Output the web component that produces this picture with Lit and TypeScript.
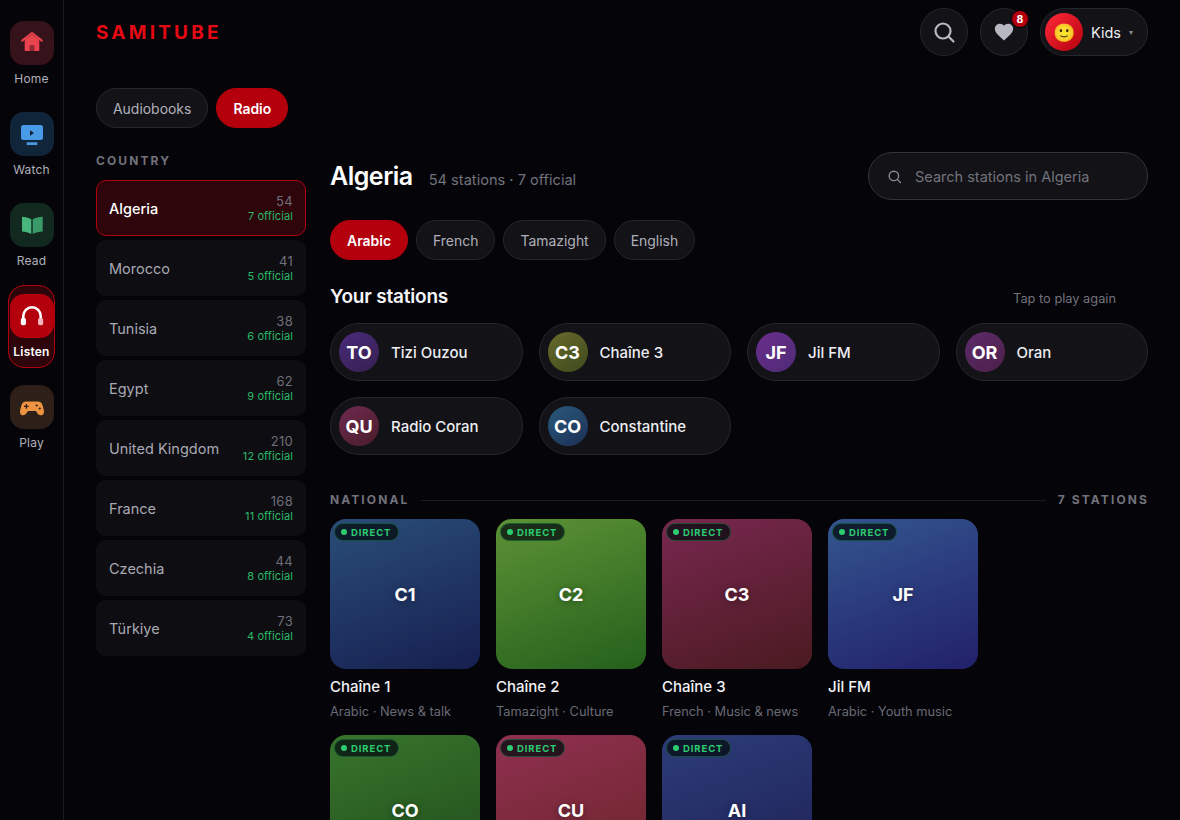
import { LitElement, html, css, svg } from "lit";
import { customElement } from "lit/decorators.js";

const nav = [
  { label: "Home", cls: "home", icon: svg`<path d="M3.200 10.600 13 3l9.800 7.600" fill="none" stroke="#e8434f" stroke-width="2" stroke-linecap="round" stroke-linejoin="round"/><path d="M5.700 9.800 13 4.500l7.300 5.300V21H5.700z" fill="#e8434f"/><rect x="10.700" y="15" width="4.600" height="6" fill="#8f2a33"/>` },
  { label: "Watch", cls: "watch", icon: svg`<rect x="2" y="4" width="22" height="15" rx="2.500" fill="#4a9be6"/><path d="M11 9.300v5.400l4-2.700z" fill="#10202f"/><rect x="7.700" y="21.300" width="10.600" height="2.700" rx=".5" fill="#4a9be6"/>` },
  { label: "Read", cls: "read", icon: svg`<path d="M3 4.800c3.400.2 6.500 1 9.300 2.400V22c-2.800-1.400-5.900-2.300-9.300-2.500z" fill="#48b67c"/><path d="M13.700 7.200c2.800-1.400 6.600-2.200 10-2.400v14.700c-3.400.2-7.200 1.100-10 2.500z" fill="#3a9a68"/>` },
  { label: "Listen", cls: "listen", icon: svg`<path d="M4.300 16v-3a8.700 8.700 0 0 1 17.400 0v3" fill="none" stroke="#fff" stroke-width="2.600"/><rect x="1.800" y="15" width="5.200" height="7.300" rx="2" fill="#fff"/><rect x="19" y="15" width="5.200" height="7.300" rx="2" fill="#f4b6bc"/>` },
  { label: "Play", cls: "play", icon: svg`<path d="M7.500 7.500h11c3 0 4.500 1.500 5.200 4.200l1.200 4.800c.5 2.500-.7 4.800-2.900 4.800-1.700 0-2.800-1-3.800-2.300L17 17H9l-1.200 1.800C6.800 20 5.700 21.300 4 21.300c-2.200 0-3.400-2.300-2.900-4.800l1.200-4.800C3 9 4.500 7.500 7.500 7.500z" fill="#ee9340"/><path d="M6.700 10h1.300v1.700h1.700V13H8v1.700H6.700V13H5v-1.300h1.700z" fill="#2e2018"/><circle cx="17.700" cy="11.500" r="1.100" fill="#2e2018"/><circle cx="20.700" cy="14.500" r="1.100" fill="#2e2018"/>` },
];
const countries = [
  ["Algeria", 54, 7], ["Morocco", 41, 5], ["Tunisia", 38, 6], ["Egypt", 62, 9],
  ["United Kingdom", 210, 12], ["France", 168, 11], ["Czechia", 44, 8], ["Türkiye", 73, 4],
];
const mine = [
  ["TO", "Tizi Ouzou", "#4a2a7c", "#35204f"], ["C3", "Chaîne 3", "#6b6a2a", "#3c4a1e"],
  ["JF", "Jil FM", "#6a2f8a", "#4f2a78"], ["OR", "Oran", "#5f2a6a", "#4a2048"],
  ["QU", "Radio Coran", "#6e2a50", "#4a1c2a"], ["CO", "Constantine", "#2a5a7c", "#1c2f55"],
];
const cards = [
  ["C1", "Chaîne 1", "Arabic · News & talk", "#2a4d78", "#161f50"],
  ["C2", "Chaîne 2", "Tamazight · Culture", "#5c9235", "#25601c"],
  ["C3", "Chaîne 3", "French · Music & news", "#78284f", "#4a1a20"],
  ["JF", "Jil FM", "Arabic · Youth music", "#33558f", "#22206a"],
  ["CO", "Constantine", "Arabic · Regional", "#38752c", "#1e4a1a"],
  ["CU", "Culture", "French · Culture", "#8f3050", "#6a2428"],
  ["AI", "Algérie Int.", "Arabic · World", "#2c3c78", "#1e2055"],
];

@customElement("app-root")
export class AppRoot extends LitElement {
  static styles = css`
    :host { display: flex; width: 1180px; height: 820px; overflow: hidden; background: #040409; color: #f2f2f5; font-family: Inter, "Noto Sans", sans-serif; }
    * { box-sizing: border-box; }
    .rail { width: 64px; flex: none; border-right: 1px solid #1a1a21; background: #050509; display: flex; flex-direction: column; align-items: flex-start; padding: 12px 0 0 8px; gap: 8px; }
    .nav { width: 47px; height: 83px; padding-top: 8px; border: 1px solid transparent; border-radius: 16px; display: flex; flex-direction: column; align-items: center; gap: 6px; font-size: 12px; line-height: 16px; color: #b0b0ba; letter-spacing: .2px; }
    .nav.listen { border-color: #b0000e; background: #2e050b; color: #fff; font-weight: 600; }
    .ic { width: 44px; height: 44px; flex: none; border-radius: 14px; display: flex; align-items: center; justify-content: center; margin-right: -1px; }
    .ic svg { width: 26px; height: 26px; }
    .home .ic { background: #36121a; } .watch .ic { background: #10243a; } .read .ic { background: #12291f; } .listen .ic { background: #b4000d; } .play .ic { background: #2e2018; }
    .main { flex: 1; min-width: 0; padding: 8px 32px 0; display: flex; flex-direction: column; }
    .top { height: 48px; display: flex; align-items: center; justify-content: space-between; flex: none; }
    .logo { color: #e50914; font-size: 19px; font-weight: 700; letter-spacing: 3.200px; }
    .actions { display: flex; gap: 12px; align-items: center; }
    .rb { width: 48px; height: 48px; border-radius: 50%; background: #121217; border: 1px solid #26262d; display: flex; align-items: center; justify-content: center; position: relative; }
    .badge { position: absolute; top: 1px; right: -2px; width: 18px; height: 18px; border-radius: 50%; background: #b4000d; border: 1px solid #040409; color: #fff; font-size: 10.500px; font-weight: 700; display: flex; align-items: center; justify-content: center; }
    .kids { height: 48px; width: 108px; border-radius: 24px; background: #121217; border: 1px solid #26262d; display: flex; align-items: center; padding-left: 4px; font-size: 14.500px; color: #ededf2; }
    .avatar { width: 38px; height: 38px; border-radius: 50%; background: linear-gradient(135deg, #ff2a3a, #b4000d); display: flex; align-items: center; justify-content: center; font-size: 18px; margin-right: 8px; flex: none; }
    .caret { font-size: 8px; margin-left: 8px; color: #8a8a94; }
    .tabs { display: flex; gap: 8px; margin-top: 32px; flex: none; }
    .pill { height: 40px; padding: 1px 16px 0; border-radius: 20px; background: #121217; border: 1px solid #26262d; display: flex; align-items: center; font-size: 13.950px; color: #b0b0ba; }
    .pill.on { background: #b4000d; border-color: #b4000d; color: #fff; font-weight: 600; }
    .cols { display: flex; gap: 24px; margin-top: 24px; flex: none; }
    .side { width: 210px; flex: none; }
    .seclabel { font-size: 12px; font-weight: 700; letter-spacing: 2.100px; color: #72727c; line-height: 18px; }
    .seclabel.end { margin-right: -1px; }
    .list { display: flex; flex-direction: column; gap: 4px; margin-top: 10px; }
    .country { height: 56px; border-radius: 10px; background: #0d0d12; border: 1px solid #0f0f15; display: flex; align-items: center; justify-content: space-between; padding: 0 12px; font-size: 14.500px; color: #a9a9b3; }
    .country.on { background: #2e050b; border-color: #b4000d; color: #fff; font-weight: 500; }
    .cnt { text-align: right; font-size: 13px; line-height: 15px; color: #6f6f79; letter-spacing: .3px; font-weight: 400; }
    .cnt div:last-child { font-size: 11px; color: #2bb868; line-height: 14px; letter-spacing: .1px; }
    .content { flex: 1; min-width: 0; }
    .head { display: flex; align-items: center; justify-content: space-between; height: 48px; }
    .title { display: flex; align-items: baseline; gap: 16px; }
    h1 { margin: 0; font-size: 25px; font-weight: 600; letter-spacing: -.5px; color: #fff; }
    .meta { font-size: 14.600px; color: #72727c; }
    .search { width: 280px; height: 48px; border-radius: 24px; background: #121217; border: 1px solid #33333a; display: flex; align-items: center; gap: 13px; padding-left: 18px; font-size: 14.500px; color: #72727c; }
    .langs { display: flex; gap: 8px; margin-top: 20px; }
    .yours { display: flex; justify-content: space-between; align-items: center; margin-top: 24px; height: 24px; }
    h2 { margin: 0; font-size: 19px; font-weight: 600; letter-spacing: -.2px; color: #f5f5f8; }
    .hint { font-size: 12.800px; color: #72727c; padding: 4px 32px 0 0; }
    .stations { display: grid; grid-template-columns: repeat(4, 1fr); gap: 16px; margin-top: 15px; }
    .st { height: 58px; border-radius: 29px; background: #121217; border: 1px solid #26262d; display: flex; align-items: center; padding-left: 8px; gap: 12px; font-size: 15px; font-weight: 500; color: #ededf2; }
    .nm { padding-top: 1px; }
    .dot { width: 40px; height: 40px; border-radius: 50%; display: flex; align-items: center; justify-content: center; color: #fff; font-size: 18px; font-weight: 700; flex: none; }
    .nat { display: flex; align-items: center; gap: 12px; margin-top: 36px; height: 18px; margin-bottom: -2px; }
    .nat i { flex: 1; height: 1px; background: #1c1c23; }
    .cards { display: grid; grid-template-columns: repeat(4, 150px); gap: 16px; margin-top: 12px; }
    .card { width: 150px; height: 200px; }
    .art { height: 150px; border-radius: 16px; position: relative; display: flex; align-items: center; justify-content: center; font-size: 18px; font-weight: 700; color: #fff; text-shadow: 0 1px 6px rgba(0,0,0,.4); }
    .live { position: absolute; top: 4px; left: 4px; height: 18px; padding: 0 7px 0 6px; border-radius: 9px; background: rgba(4,12,16,.75); border: 1px solid rgba(46,204,113,.3); display: flex; align-items: center; gap: 4px; font-size: 9.500px; font-weight: 700; letter-spacing: .9px; color: #2ecc71; text-shadow: none; }
    .live b { width: 6px; height: 6px; border-radius: 50%; background: #2ecc71; }
    .name { font-size: 15px; font-weight: 500; color: #f2f2f5; margin-top: 8px; line-height: 20px; }
    .sub { font-size: 12.800px; color: #6a6a74; margin-top: 7px; line-height: 16px; }
  `;

  render() {
    return html`
      <nav class="rail">
        ${nav.map((n) => html`<div class="nav ${n.cls}"><div class="ic"><svg viewBox="0 0 26 26">${n.icon}</svg></div><span>${n.label}</span></div>`)}
      </nav>
      <div class="main">
        <header class="top">
          <div class="logo">SAMITUBE</div>
          <div class="actions">
            <div class="rb"><svg width="24" height="24" viewBox="0 0 24 24" fill="none" stroke="#b8b8c2" stroke-width="2.200" stroke-linecap="round"><circle cx="11" cy="11" r="7.500"/><path d="m17 17 4.500 4.500"/></svg></div>
            <div class="rb"><svg width="22" height="22" viewBox="0 0 24 24" fill="#b8b8c2"><path d="M12 21.300 10.500 20C5.400 15.400 2 12.300 2 8.500 2 5.400 4.400 3 7.500 3c1.700 0 3.400.8 4.500 2.100C13.100 3.800 14.800 3 16.500 3 19.600 3 22 5.400 22 8.500c0 3.800-3.400 6.900-8.500 11.500z"/></svg><span class="badge">8</span></div>
            <div class="kids"><span class="avatar">🙂</span>Kids<span class="caret">▾</span></div>
          </div>
        </header>
        <div class="tabs"><div class="pill">Audiobooks</div><div class="pill on">Radio</div></div>
        <div class="cols">
          <aside class="side">
            <div class="seclabel">COUNTRY</div>
            <div class="list">
              ${countries.map((c, i) => html`<div class="country ${i === 0 ? "on" : ""}"><span>${c[0]}</span><div class="cnt"><div>${c[1]}</div><div>${c[2]} official</div></div></div>`)}
            </div>
          </aside>
          <section class="content">
            <div class="head">
              <div class="title"><h1>Algeria</h1><span class="meta">54 stations · 7 official</span></div>
              <div class="search"><svg width="15" height="15" viewBox="0 0 24 24" fill="none" stroke="#8a8a94" stroke-width="2.200" stroke-linecap="round"><circle cx="11" cy="11" r="7.500"/><path d="m17 17 4.500 4.500"/></svg>Search stations in Algeria</div>
            </div>
            <div class="langs"><div class="pill on">Arabic</div><div class="pill">French</div><div class="pill">Tamazight</div><div class="pill">English</div></div>
            <div class="yours"><h2>Your stations</h2><span class="hint">Tap to play again</span></div>
            <div class="stations">
              ${mine.map((m) => html`<div class="st"><span class="dot" style="background:linear-gradient(145deg,${m[2]},${m[3]})">${m[0]}</span><span class="nm">${m[1]}</span></div>`)}
            </div>
            <div class="nat"><span class="seclabel">NATIONAL</span><i></i><span class="seclabel end">7 STATIONS</span></div>
            <div class="cards">
              ${cards.map((c) => html`<div class="card"><div class="art" style="background:linear-gradient(160deg,${c[3]},${c[4]})"><span class="live"><b></b>DIRECT</span>${c[0]}</div><div class="name">${c[1]}</div><div class="sub">${c[2]}</div></div>`)}
            </div>
          </section>
        </div>
      </div>
    `;
  }
}
